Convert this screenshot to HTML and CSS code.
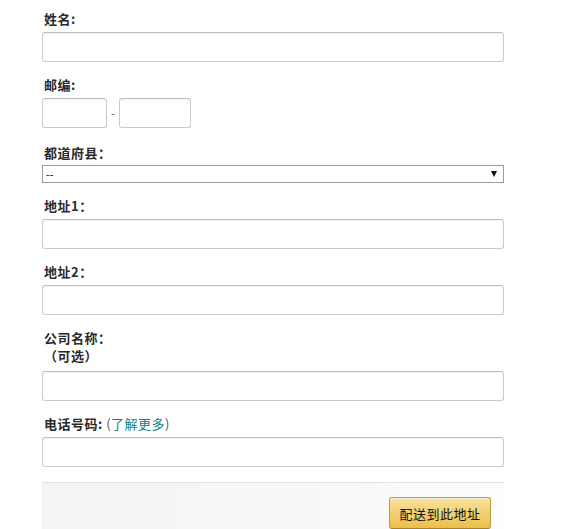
FILE: index.html
```html
<!DOCTYPE html>
<html lang="zh-CN">
<head>
<meta charset="utf-8">
<link rel="stylesheet" href="styles.css">
</head>
<body>
<form class="form">
  <div class="field">
    <label class="label">姓名:</label>
    <input class="input" type="text">
  </div>
  <div class="field field-zip">
    <label class="label">邮编:</label>
    <div class="zip-row">
      <input class="input zip-a" type="text">
      <span class="dash">-</span>
      <input class="input zip-b" type="text">
    </div>
  </div>
  <div class="field field-select">
    <label class="label">都道府县：</label>
    <div class="select-wrap">
      <select class="select"><option>--</option></select>
    </div>
  </div>
  <div class="field">
    <label class="label">地址1：</label>
    <input class="input" type="text">
  </div>
  <div class="field">
    <label class="label">地址2：</label>
    <input class="input" type="text">
  </div>
  <div class="field">
    <label class="label label-two">公司名称：<br>（可选）</label>
    <input class="input" type="text">
  </div>
  <div class="field">
    <label class="label">电话号码: <span class="paren">(</span><a class="link" href="#">了解更多</a><span class="paren">)</span></label>
    <input class="input" type="text">
  </div>
  <div class="actions">
    <button class="btn" type="button">配送到此地址</button>
  </div>
</form>
</body>
</html>
```
FILE: styles.css
```css
html, body {
  margin: 0;
  padding: 0;
  background: #ffffff;
}
body {
  font-family: "Noto Sans CJK SC", "Liberation Sans", sans-serif;
  color: #222;
  overflow: hidden;
}
.form {
  width: 462px;
  margin-left: 42px;
  padding-top: 10px;
}
.field {
  display: flex;
  flex-direction: column;
  margin-bottom: 14px;
}
.field-zip {
  margin-bottom: 16px;
}
.field-select {
  margin-bottom: 14px;
}
.label {
  display: block;
  font-size: 13px;
  font-weight: bold;
  line-height: 18px;
  height: 18px;
  margin: 0 0 4px 2px;
  color: #2a2a2a;
  letter-spacing: 0.5px;
}
.label-two {
  height: 36px;
  margin-bottom: 6px;
}
.field-select .label {
  margin-bottom: 3px;
}
.paren {
  font-weight: normal;
  color: #555;
}
.link {
  font-weight: normal;
  color: #11818c;
  text-decoration: none;
}
.input {
  display: block;
  box-sizing: border-box;
  width: 462px;
  height: 30px;
  margin: 0;
  border: 1px solid #cbcbcb;
  border-top-color: #bdbdbd;
  border-radius: 3px;
  background: #fff;
  box-shadow: inset 0 1px 1px rgba(0,0,0,0.05);
  outline: none;
}
.zip-row {
  display: flex;
  align-items: center;
}
.zip-a {
  width: 65px;
}
.zip-b {
  width: 72px;
}
.dash {
  width: 12px;
  text-align: center;
  font-size: 11px;
  color: #555;
  line-height: 30px;
}
.select-wrap {
  position: relative;
  width: 462px;
  height: 18px;
}
.select {
  display: block;
  -webkit-appearance: none;
  appearance: none;
  box-sizing: border-box;
  width: 462px;
  height: 18px;
  margin: 0;
  padding: 0 0 0 3px;
  border: 1px solid #9b9b9b;
  border-radius: 0;
  background: #fff;
  font-family: "Liberation Sans", sans-serif;
  font-size: 11px;
  color: #111;
  line-height: 16px;
  outline: none;
}
.select-wrap::after {
  content: "";
  position: absolute;
  right: 7px;
  top: 6px;
  border-left: 3.5px solid transparent;
  border-right: 3.5px solid transparent;
  border-top: 6px solid #111;
}
.actions {
  display: flex;
  justify-content: flex-end;
  margin-top: 15px;
  padding: 14px 13px 20px 0;
  border-top: 1px solid #e2e2e2;
  background: linear-gradient(to right, #f4f4f4 0%, #f8f8f8 60%, #fdfdfd 100%);
}
.btn {
  box-sizing: border-box;
  width: 102px;
  height: 32px;
  padding: 0;
  border: 1px solid #c49b3a;
  border-bottom-color: #a9822c;
  border-radius: 3px;
  background: linear-gradient(to bottom, #f9e3a2 0%, #f2cf6c 55%, #ecbf4c 100%);
  box-shadow: inset 0 1px 0 rgba(255,255,255,0.6);
  font-family: "Noto Sans CJK SC", sans-serif;
  font-size: 13px;
  color: #111;
  letter-spacing: 0.5px;
  cursor: pointer;
}
```
